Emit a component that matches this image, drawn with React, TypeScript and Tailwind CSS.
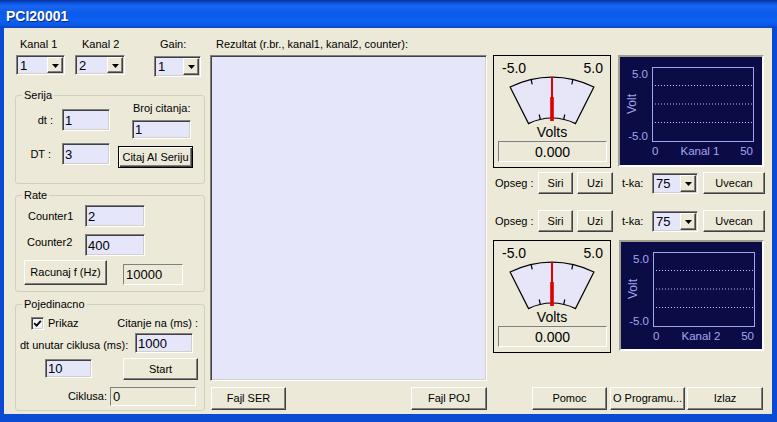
import React from "react";

const AF = "font-['Liberation_Sans',Arial,sans-serif]";
const LBL = `${AF} text-[11px] leading-[15px] whitespace-nowrap text-black`;
const VAL = `${AF} text-[13px] leading-[15px] text-black`;
const SUNKEN =
  "box-border border border-t-[#808080] border-l-[#808080] border-b-white border-r-white shadow-[inset_1px_1px_0_#404040,inset_-1px_-1px_0_#d4d0c8]";
const STATIC =
  "box-border border border-t-[#808080] border-l-[#808080] border-b-white border-r-white bg-[#ece9d8]";
const RAISED =
  "box-border border border-t-white border-l-white border-b-[#404040] border-r-[#404040] shadow-[inset_-1px_-1px_0_#808080]";
const DEFBTN =
  "box-border border border-black shadow-[inset_1px_1px_0_#ffffff,inset_-1px_-1px_0_#404040,inset_-2px_-2px_0_#808080]";
const GROUP = "border border-[#d0d0bf] rounded-[3px] min-w-0";

function Input({ cls, v, ro }: { cls: string; v: string; ro?: boolean }) {
  return (
    <div className={`${cls} ${ro ? STATIC : `${SUNKEN} bg-[#e6e6fa]`} flex items-center pl-[2px] ${VAL} shrink-0`}>
      {v}
    </div>
  );
}

function Btn({ cls, children, def }: { cls: string; children: React.ReactNode; def?: boolean }) {
  return (
    <button
      type="button"
      className={`${cls} ${def ? DEFBTN : RAISED} bg-[#ece9d8] flex items-center justify-center shrink-0 ${LBL}`}
    >
      {children}
    </button>
  );
}

function Combo({ cls, v }: { cls: string; v: string }) {
  return (
    <div className={`${cls} ${SUNKEN} bg-[#e6e6fa] flex shrink-0 p-[1px]`}>
      <span className={`flex-1 flex items-center pl-[2px] ${VAL}`}>{v}</span>
      <span className={`w-[16px] ${RAISED} bg-[#ece9d8] flex items-center justify-center`}>
        <svg width="7" height="4" viewBox="0 0 7 4" className="block mt-[1px]">
          <polygon points="0,0 7,0 3.5,4" fill="#000" />
        </svg>
      </span>
    </div>
  );
}

function Check({ cls }: { cls: string }) {
  return (
    <span className={`${cls} w-[13px] h-[13px] ${SUNKEN} bg-[#f2f2fb] flex items-center justify-center shrink-0`}>
      <svg width="9" height="9" viewBox="0 0 9 9" className="block">
        <path d="M1.2 4.2 L3.6 6.6 L7.8 1.8" stroke="#000" strokeWidth="1.8" fill="none" />
      </svg>
    </span>
  );
}

function Meter() {
  return (
    <div className="w-[118px] h-[113px] box-border border border-black bg-[#ece9d8] flex flex-col shrink-0">
      <div className={`flex justify-between pl-[8px] pr-[7px] pt-[4px] ${AF} text-[14px] leading-[16px] text-black`}>
        <span>-5.0</span>
        <span>5.0</span>
      </div>
      <svg width="116" height="48" viewBox="0 0 116 48" className="block overflow-visible">
        <path
          d="M16.1 11 A93 93 0 0 1 99.9 11 L81.45 47.6 A52 52 0 0 0 34.55 47.6 Z"
          fill="#e6e6f8"
          stroke="#000"
          strokeWidth="1.2"
        />
        <line x1="37.1" y1="3.4" x2="38.2" y2="8.3" stroke="#000" strokeWidth="1.2" />
        <line x1="78.9" y1="3.4" x2="77.8" y2="8.3" stroke="#000" strokeWidth="1.2" />
        <line x1="46.3" y1="43.3" x2="45.2" y2="38.5" stroke="#000" strokeWidth="1.2" />
        <line x1="69.7" y1="43.3" x2="70.8" y2="38.5" stroke="#000" strokeWidth="1.2" />
        <line x1="58" y1="1" x2="58" y2="45" stroke="#e00000" strokeWidth="2" />
        <rect x="56.2" y="21" width="3.6" height="24" fill="#e00000" />
      </svg>
      <div className={`${AF} text-[14px] leading-[16px] text-center text-black`}>Volts</div>
      <div
        className={`mt-[1px] ml-[4px] mr-[3px] h-[21px] ${STATIC} flex items-center justify-center ${AF} text-[14px] leading-[16px] text-black`}
      >
        0.000
      </div>
    </div>
  );
}

function Chart({ label, cls, h }: { label: string; cls: string; h: number }) {
  return (
    <div
      className={`${cls} box-border border-2 border-t-[#a09e92] border-l-[#a09e92] border-b-white border-r-white bg-[#0b0b46] shrink-0`}
    >
      <svg width="142" height={h} viewBox={`0 0 142 ${h}`} className={`block ${AF}`}>
        <rect x="32.5" y="10.5" width="101" height="74" fill="none" stroke="#a4a4f0" />
        {[28.5, 47, 65.5].map((y) => (
          <line key={y} x1="35" x2="133" y1={y} y2={y} stroke="#c4c4ff" strokeDasharray="1 2" />
        ))}
        <text x="28" y="21" textAnchor="end" fontSize="11.5" fill="#a6a6ee">
          5.0
        </text>
        <text x="28" y="83" textAnchor="end" fontSize="11.5" fill="#a6a6ee">
          -5.0
        </text>
        <text
          transform="translate(12 47) rotate(-90)"
          textAnchor="middle"
          dy="0.35em"
          fontSize="12"
          fill="#a6a6ee"
        >
          Volt
        </text>
        <text x="32" y="98" fontSize="11.5" fill="#a6a6ee">
          0
        </text>
        <text x="80" y="98" textAnchor="middle" fontSize="11.5" fill="#a6a6ee">
          {label}
        </text>
        <text x="133" y="98" textAnchor="end" fontSize="11.5" fill="#a6a6ee">
          50
        </text>
      </svg>
    </div>
  );
}

function CtrlRow({ cls }: { cls: string }) {
  return (
    <div className={`${cls} flex items-center h-[22px]`}>
      <span className={`${LBL} w-[45px] pl-[2px] shrink-0`}>Opseg :</span>
      <Btn cls="w-[35px] h-[22px]">Siri</Btn>
      <Btn cls="ml-[4px] w-[36px] h-[22px]">Uzi</Btn>
      <span className={`${LBL} ml-[9px] w-[30px] shrink-0`}>t-ka:</span>
      <Combo cls="w-[46px] h-[21px]" v="75" />
      <Btn cls="ml-[5px] w-[62px] h-[22px]">Uvecan</Btn>
    </div>
  );
}

export default function App() {
  return (
    <div className="w-[777px] h-[422px] flex flex-col bg-[#0b4bd4] overflow-hidden select-none">
      <div className="h-[28px] shrink-0 flex items-center pl-[6px] pt-[3px] bg-[linear-gradient(180deg,#0a2f96_0%,#0a4fd8_9%,#1666f2_22%,#0b5bea_50%,#0c60f3_75%,#0a55e0_92%,#0846c0_100%)]">
        <span className={`${AF} font-bold text-[14px] leading-[16px] text-white [text-shadow:1px_1px_0_#0a2a80]`}>
          PCI20001
        </span>
      </div>
      <div className="flex-1 ml-[4px] mr-[5px] mb-[8px] bg-[#ece9d8] flex">
        {/* Left column */}
        <div className="ml-[11px] w-[190px] flex flex-col pt-[9px] shrink-0">
          <div className="flex h-[40px]">
            <div className="ml-[1px] flex flex-col">
              <span className={`${LBL} pl-[4px]`}>Kanal 1</span>
              <Combo cls="mt-[3px] w-[49px] h-[20px]" v="1" />
            </div>
            <div className="ml-[10px] flex flex-col">
              <span className={`${LBL} pl-[7px]`}>Kanal 2</span>
              <Combo cls="mt-[3px] w-[50px] h-[20px]" v="2" />
            </div>
            <div className="ml-[29px] flex flex-col">
              <span className={`${LBL} pl-[6px]`}>Gain:</span>
              <Combo cls="mt-[4px] w-[47px] h-[21px]" v="1" />
            </div>
          </div>

          <fieldset className={`mt-[11px] ${GROUP}`}>
            <legend className={`${LBL} ml-[6px] px-[2px]`}>Serija</legend>
            <div className="h-[80px] flex">
              <div className="w-[102px] flex flex-col pt-[6px]">
                <div className="flex items-center">
                  <span className={`${LBL} w-[46px] text-right pr-[9px] shrink-0`}>dt :</span>
                  <Input cls="w-[48px] h-[22px]" v="1" />
                </div>
                <div className="flex items-center mt-[12px]">
                  <span className={`${LBL} w-[46px] text-right pr-[11px] shrink-0`}>DT :</span>
                  <Input cls="w-[48px] h-[22px]" v="3" />
                </div>
              </div>
              <div className="w-[75px] flex flex-col -mt-[2px]">
                <span className={`${LBL} pl-[15px]`}>Broj citanja:</span>
                <Input cls="mt-[4px] ml-[14px] w-[59px] h-[19px]" v="1" />
                <Btn def cls="mt-[7px] w-[75px] h-[22px]">
                  Citaj AI Seriju
                </Btn>
              </div>
            </div>
          </fieldset>

          <fieldset className={`mt-[4px] ${GROUP}`}>
            <legend className={`${LBL} ml-[6px] px-[2px]`}>Rate</legend>
            <div className="h-[88px] flex flex-col pt-[2px]">
              <div className="flex items-center">
                <span className={`${LBL} w-[69px] pl-[12px] shrink-0`}>Counter1</span>
                <Input cls="w-[60px] h-[22px]" v="2" />
              </div>
              <div className="flex items-center mt-[7px]">
                <span className={`${LBL} w-[69px] pl-[11px] -mt-[5px] shrink-0`}>Counter2</span>
                <Input cls="w-[60px] h-[22px]" v="400" />
              </div>
              <div className="flex items-end mt-[4px]">
                <Btn cls="ml-[8px] w-[83px] h-[25px]">Racunaj f (Hz)</Btn>
                <Input ro cls="ml-[16px] w-[60px] h-[21px]" v="10000" />
              </div>
            </div>
          </fieldset>

          <fieldset className={`mt-[5px] ${GROUP}`}>
            <legend className={`${LBL} ml-[6px] px-[2px]`}>Pojedinacno</legend>
            <div className="h-[98px] flex flex-col pt-[4px]">
              <div className="flex items-center h-[15px]">
                <Check cls="ml-[15px]" />
                <span className={`${LBL} ml-[4px]`}>Prikaz</span>
                <span className={`${LBL} ml-auto mr-[6px]`}>Citanje na (ms) :</span>
              </div>
              <div className="flex items-end mt-[2px]">
                <span className={`${LBL} ml-[4px]`}>dt unutar ciklusa (ms):</span>
                <Input cls="ml-auto mr-[11px] w-[58px] h-[20px]" v="1000" />
              </div>
              <div className="flex items-start mt-[5px]">
                <Input cls="ml-[29px] mt-[1px] w-[47px] h-[19px]" v="10" />
                <Btn cls="ml-[31px] w-[75px] h-[22px]">Start</Btn>
              </div>
              <div className="flex items-center justify-end mt-[7px] pr-[8px]">
                <span className={`${LBL} mr-[3px]`}>Ciklusa:</span>
                <Input ro cls="w-[86px] h-[19px]" v="0" />
              </div>
            </div>
          </fieldset>
        </div>

        {/* Center column */}
        <div className="ml-[5px] w-[277px] flex flex-col pt-[9px] shrink-0">
          <span className={`${LBL} pl-[6px]`}>Rezultat (r.br., kanal1, kanal2, counter):</span>
          <div className={`mt-[3px] h-[326px] ${SUNKEN} bg-[#e6e6fa]`} />
          <div className="mt-[6px] flex justify-between pl-[1px]">
            <Btn cls="w-[75px] h-[23px]">Fajl SER</Btn>
            <Btn cls="w-[76px] h-[23px]">Fajl POJ</Btn>
          </div>
        </div>

        {/* Right column */}
        <div className="ml-[6px] w-[272px] flex flex-col pt-[27px] shrink-0">
          <div className="flex items-start">
            <Meter />
            <Chart label="Kanal 1" cls="ml-[7px] w-[146px] h-[112px]" h={108} />
          </div>
          <CtrlRow cls="mt-[4px]" />
          <CtrlRow cls="mt-[16px]" />
          <div className="mt-[8px] flex items-start">
            <Meter />
            <Chart label="Kanal 2" cls="ml-[8px] w-[145px] h-[111px]" h={107} />
          </div>
          <div className="mt-[34px] flex">
            <Btn cls="ml-[39px] w-[75px] h-[23px]">Pomoc</Btn>
            <Btn cls="ml-[3px] w-[75px] h-[23px]">O Programu...</Btn>
            <Btn cls="ml-[2px] w-[76px] h-[23px]">Izlaz</Btn>
          </div>
        </div>
      </div>
    </div>
  );
}
